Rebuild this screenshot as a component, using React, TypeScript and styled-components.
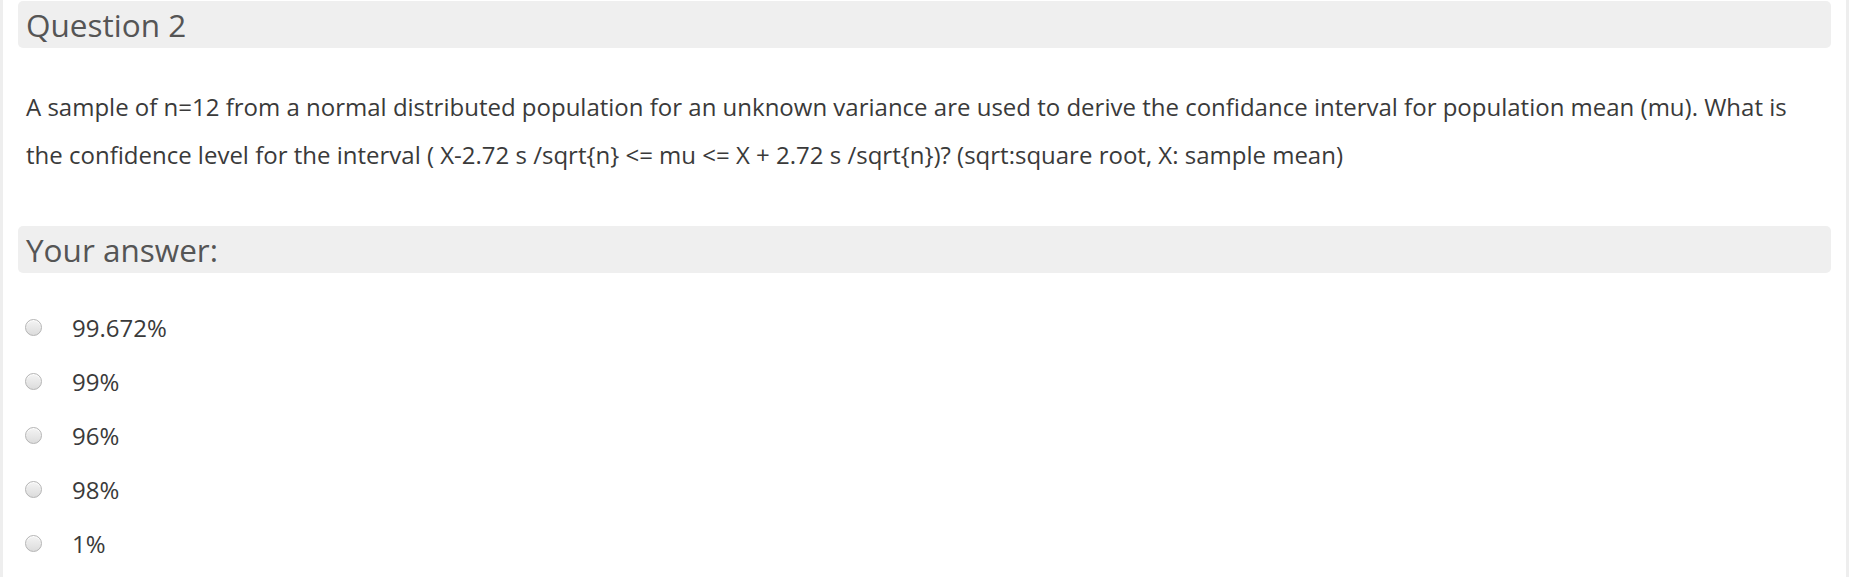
import * as React from "react";
import styled, { createGlobalStyle } from "styled-components";

const GlobalStyle = createGlobalStyle`
	html, body {
		margin: 0;
		padding: 0;
		background: #fff;
	}
	body {
		font-family: "Open Sans", "Noto Sans", sans-serif;
		color: #333;
	}
`;

const questionText =
	"A sample of n=12 from a normal distributed population for an unknown variance are used to derive the confidance interval for population mean (mu). What is the confidence level for the interval ( X-2.72 s /sqrt{n} <= mu <= X + 2.72 s /sqrt{n})? (sqrt:square root, X: sample mean)";

const options = ["99.672%", "99%", "96%", "98%", "1%"];

export default function App() {
	const [selected, setSelected] = React.useState<number | null>(null);

	return (
		<>
			<GlobalStyle />
			<Page>
				<SectionHeader>Question 2</SectionHeader>
				<QuestionText>{questionText}</QuestionText>
				<SectionHeader>Your answer:</SectionHeader>
				<Answers>
					{options.map((o, i) => (
						<AnswerRow key={o} onClick={() => setSelected(i)}>
							<Radio checked={selected === i} />
							<AnswerLabel>{o}</AnswerLabel>
						</AnswerRow>
					))}
				</Answers>
			</Page>
		</>
	);
}

const Page = styled.div`
	box-sizing: border-box;
	width: 1849px;
	min-height: 577px;
	padding: 1px 15px 0 15px;
	border-left: 3px solid #eeeeee;
	border-right: 3px solid #eeeeee;
`;

const SectionHeader = styled.div`
	height: 47px;
	line-height: 47px;
	padding: 0 8px;
	background: #efefef;
	border-radius: 5px;
	font-size: 31.5px;
	color: #555;
	white-space: nowrap;
`;

const QuestionText = styled.p`
	margin: 35px 0 47px 0;
	padding: 0 8px;
	font-size: 24px;
	line-height: 48px;
	color: #3a3a3a;
`;

const Answers = styled.div`
	display: flex;
	flex-direction: column;
	padding-top: 27px;
`;

const AnswerRow = styled.label`
	display: flex;
	align-items: center;
	height: 54px;
	padding-left: 7px;
	cursor: pointer;
`;

const Radio = styled.span<{ checked: boolean }>`
	box-sizing: border-box;
	width: 17px;
	height: 17px;
	border-radius: 50%;
	border: 1px solid #b4b4b4;
	background: linear-gradient(#f4f4f4, #dcdcdc);
	box-shadow: inset 0 1px 0 #fff;
	position: relative;
	flex-shrink: 0;

	&::after {
		content: "";
		display: ${({ checked }) => (checked ? "block" : "none")};
		position: absolute;
		left: 4px;
		top: 4px;
		width: 7px;
		height: 7px;
		border-radius: 50%;
		background: #444;
	}
`;

const AnswerLabel = styled.span`
	margin-left: 30px;
	font-size: 24px;
	color: #3a3a3a;
`;
